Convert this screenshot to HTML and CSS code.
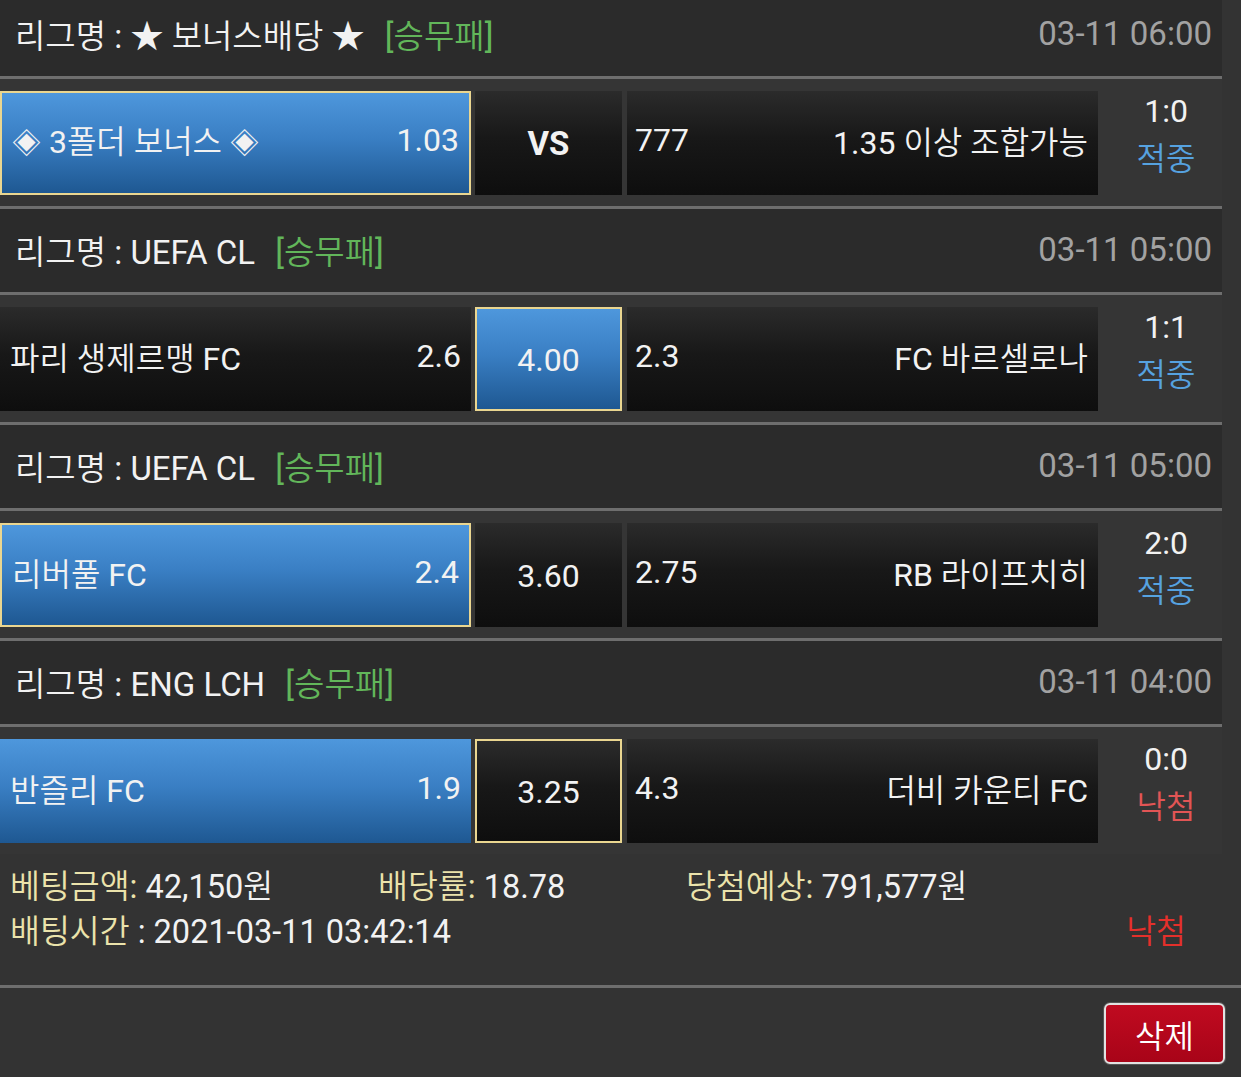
FILE: index.html
```html
<!DOCTYPE html>
<html lang="ko">
<head>
<meta charset="utf-8">
<title>베팅내역</title>
<link rel="stylesheet" href="styles.css">
</head>
<body>
<div class="games">
  <section class="game">
    <div class="league">
      <div class="league-name">리그명 : ★ 보너스배당 ★ <span class="type">[승무패]</span></div>
      <div class="time">03-11 06:00</div>
    </div>
    <div class="bet">
      <div class="cell team home blue picked"><span><span class="dia">◈</span> 3폴더 보너스 <span class="dia">◈</span></span><span>1.03</span></div>
      <div class="cell draw"><b class="vs">VS</b></div>
      <div class="cell team away"><span>777</span><span>1.35 이상 조합가능</span></div>
      <div class="result"><span class="score">1:0</span><span class="hit">적중</span></div>
    </div>
  </section>
  <section class="game">
    <div class="league">
      <div class="league-name">리그명 : UEFA CL <span class="type">[승무패]</span></div>
      <div class="time">03-11 05:00</div>
    </div>
    <div class="bet">
      <div class="cell team home"><span>파리 생제르맹 FC</span><span>2.6</span></div>
      <div class="cell draw blue picked"><span>4.00</span></div>
      <div class="cell team away"><span>2.3</span><span>FC 바르셀로나</span></div>
      <div class="result"><span class="score">1:1</span><span class="hit">적중</span></div>
    </div>
  </section>
  <section class="game">
    <div class="league">
      <div class="league-name">리그명 : UEFA CL <span class="type">[승무패]</span></div>
      <div class="time">03-11 05:00</div>
    </div>
    <div class="bet">
      <div class="cell team home blue picked"><span>리버풀 FC</span><span>2.4</span></div>
      <div class="cell draw"><span>3.60</span></div>
      <div class="cell team away"><span>2.75</span><span>RB 라이프치히</span></div>
      <div class="result"><span class="score">2:0</span><span class="hit">적중</span></div>
    </div>
  </section>
  <section class="game">
    <div class="league">
      <div class="league-name">리그명 : ENG LCH <span class="type">[승무패]</span></div>
      <div class="time">03-11 04:00</div>
    </div>
    <div class="bet">
      <div class="cell team home blue"><span>반즐리 FC</span><span>1.9</span></div>
      <div class="cell draw picked"><span>3.25</span></div>
      <div class="cell team away"><span>4.3</span><span>더비 카운티 FC</span></div>
      <div class="result"><span class="score">0:0</span><span class="miss">낙첨</span></div>
    </div>
  </section>
</div>
<div class="summary">
  <div class="summary-row grid">
    <div><span class="label">베팅금액:</span> 42,150원</div>
    <div><span class="label">배당률:</span> 18.78</div>
    <div><span class="label">당첨예상:</span> 791,577원</div>
  </div>
  <div class="summary-row split">
    <div><span class="label">배팅시간</span> : 2021-03-11 03:42:14</div>
    <div class="status-lose">낙첨</div>
  </div>
</div>
<div class="actions">
  <button class="btn-delete" type="button">삭제</button>
</div>
</body>
</html>
```

FILE: styles.css
```css
* {
  box-sizing: border-box;
  margin: 0;
  padding: 0;
}

html,
body {
  background: #333333;
}

body {
  font-family: Roboto, "Noto Sans CJK KR DemiLight", "Noto Sans CJK KR", sans-serif;
  font-size: 32px;
  font-weight: 400;
  color: #f2f2f2;
  height: 1077px;
  overflow: hidden;
}

.games {
  width: 1222px;
  margin-top: -7px;
  background: #2d2d2d;
}

.league {
  height: 86px;
  display: flex;
  align-items: center;
  justify-content: space-between;
  padding: 0 10px 2px 15px;
  background: #2b2b2b;
  border-bottom: 3px solid #6e6e6e;
  white-space: nowrap;
  font-size: 33px;
}

.type {
  color: #62b65a;
  margin-left: 12px;
}

.time {
  color: #a2a2a2;
}

.bet {
  display: flex;
  height: 130px;
  padding: 12px 0 11px;
  background: #353535;
  border-bottom: 3px solid #6e6e6e;
}

.game:last-child .bet {
  height: 127px;
  border-bottom: 0;
}

.cell {
  display: flex;
  align-items: center;
  justify-content: space-between;
  white-space: nowrap;
  background: linear-gradient(#2b2b2b 0%, #181818 45%, #0e0e0e 100%);
}

.team {
  width: 471px;
  padding: 0 10px 6px;
}

.away {
  padding-left: 8px;
}

.draw {
  width: 147px;
  margin: 0 5px 0 4px;
  justify-content: center;
  padding-top: 1px;
}

.vs {
  font-weight: 700;
  font-size: 33px;
}

.dia {
  font-size: 29px;
}

.blue {
  background: linear-gradient(#4e97dc 0%, #3a7fc4 45%, #1e5892 100%);
}

.picked {
  border: 2px solid #ead690;
}

.result {
  flex: 1;
  display: flex;
  flex-direction: column;
  align-items: center;
  padding-left: 12px;
  margin-top: -4px;
  line-height: 48px;
}

.hit {
  color: #56a2e0;
}

.miss {
  color: #e25555;
}

.summary {
  height: 134px;
  padding: 11px 55px 0 10px;
  border-bottom: 3px solid #6e6e6e;
  line-height: 45px;
  font-size: 32.5px;
}

.grid {
  display: grid;
  grid-template-columns: 368px 308px auto;
}

.split {
  display: flex;
  justify-content: space-between;
}

.label {
  color: #ebe3ab;
}

.status-lose {
  color: #e4302b;
}

.actions {
  display: flex;
  justify-content: flex-end;
  padding: 15px 16px 0 0;
}

.btn-delete {
  width: 121px;
  height: 61px;
  border: 2px solid #e2e2e2;
  border-radius: 6px;
  background: linear-gradient(#c00a20, #a80418);
  color: #ffffff;
  font-family: Roboto, "Noto Sans CJK KR DemiLight", "Noto Sans CJK KR", sans-serif;
  font-size: 32px;
  font-weight: 400;
  box-shadow: 0 0 0 1px #555;
}
```
